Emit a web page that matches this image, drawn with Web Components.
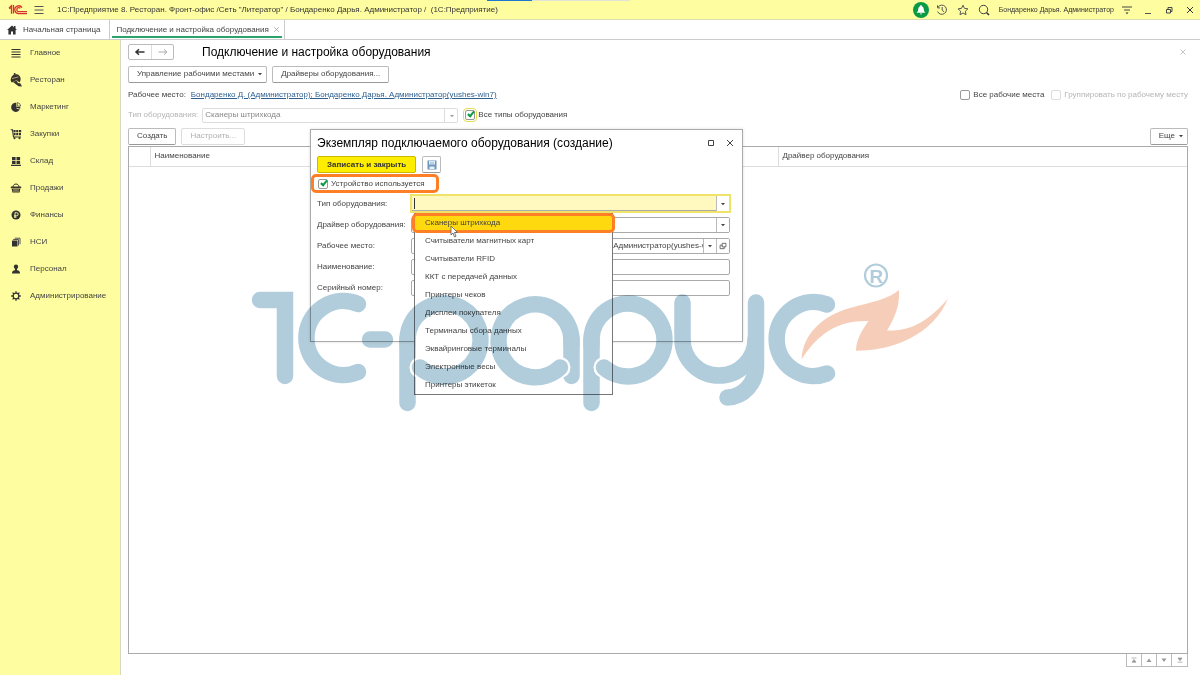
<!DOCTYPE html>
<html lang="ru">
<head>
<meta charset="utf-8">
<title>1С:Предприятие</title>
<style>
html,body{height:100%;margin:0}
body{font:8px/12px "Liberation Sans",Arial,sans-serif;color:#444;background:#fff}
</style>
</head>
<body>
<app-shell></app-shell>
<script>
const define=(name,html,setup)=>{
  const t=document.createElement('template');
  t.innerHTML='<style>*{box-sizing:border-box}button,input,select{font:inherit;color:inherit;margin:0}</style>'+html;
  customElements.define(name,class extends HTMLElement{
    constructor(){super();this.attachShadow({mode:'open'}).append(t.content.cloneNode(true));}
    connectedCallback(){if(setup&&!this.ready){this.ready=true;setup(this,this.shadowRoot);}}
  });
};

const icons={
  logo:['0 0 20 12','<g fill="none" stroke="#d8322c" stroke-width="1.3"><path d="M1 4l2.500-2.200v8M5.500 1v8.500M1 4.400h1.600"/><path d="M14 3.600A3.900 3.900 0 1 0 11 9.600h8"/><path d="M12.300 4.300A2 2 0 1 0 11 7.600h8"/></g>'],
  menu:['0 0 12 12','<path d="M1.500 2.500h9M1.500 6h9M1.500 9.500h9" stroke="#555" stroke-width="1"/>'],
  home:['0 0 12 12','<path d="M6 1.500L1 6h1.400v4.500h2.600V7.500h2v3h2.600V6H11L9.500 4.600V2H8v1.300z" fill="#333"/>'],
  bell:['0 0 16 16','<circle cx="8" cy="8" r="8" fill="#0a9a45"/><path d="M8 3.200c-.7 0-1 .4-1 1C5.200 5 5.300 7 5 8.700c-.2.900-.9 1.300-1.300 2.100h8.600c-.4-.8-1.100-1.200-1.300-2.100C10.700 7 10.800 5 9 4.200c0-.6-.3-1-1-1zM6.900 11.500c.3 1.400 1.900 1.400 2.200 0z" fill="#fff"/>'],
  history:['0 0 12 12','<path d="M2 3.200A4.600 4.600 0 1 1 1.600 7.500M1.500 1.300v2.600h2.600M6.200 3v3.200l2 1.700" fill="none" stroke="#555"/>'],
  star:['0 0 12 12','<path d="M6 1.200l1.500 3.200 3.400.4-2.500 2.400.6 3.500L6 9l-3 1.700.6-3.500L1.100 4.800l3.400-.4z" fill="none" stroke="#555"/>'],
  search:['0 0 12 12','<circle cx="5.500" cy="5.500" r="4.200" fill="none" stroke="#444"/><path d="M8.500 8.500l2.500 2.500" stroke="#333" stroke-width="1.500"/>'],
  funnel:['0 0 12 12','<path d="M1 3h10M3 6h6" stroke="#444"/><path d="M4.500 8.500h3L6 10.300z" fill="#333"/>'],
  min:['0 0 12 12','<path d="M3 9.500h6" stroke="#555"/>'],
  restore:['0 0 12 12','<path d="M3.500 5.500h4v3.500h-4zM5 5.500V3.500h4v4H7.500" fill="none" stroke="#444"/>'],
  close:['0 0 12 12','<path d="M3 3l6 6M9 3l-6 6" stroke="currentColor"/>'],
  max:['0 0 12 12','<path d="M3.500 3.500h5v5h-5z" fill="none" stroke="#444"/>'],
  list:['0 0 12 12','<path d="M1.500 2.500h9M1.500 5h9M1.500 7.500h9M1.500 10h9" stroke="#333" stroke-width="1.200"/>'],
  food:['0 0 16 16','<path d="M3 6.500C3.400 3.500 6.200 1.600 9 2.300c2.700.7 4 3.200 3.600 5.700l-1 2.500-3.200-2.200L4 10.500C2.600 9.500 2.400 8 3 6.500z" fill="#3a352c"/><circle cx="6.700" cy="1.900" r="1" fill="#3a352c"/><path d="M5 10l3.500-1.500 1.500 2.500 2.500.5 1.500 3-3.500-.3z" fill="#3a352c"/><path d="M4 6.600l6.500-1.700" stroke="#d8d48a" stroke-width=".7"/>'],
  pie:['0 0 12 12','<path d="M6.300 1.800v4h4A4.600 4.600 0 1 1 6.300 1.800z" fill="#333"/><path d="M7.300 1.500A4 4 0 0 1 10.700 5H7.300z" fill="none" stroke="#555" stroke-width=".8"/><path d="M6.500 7.300l3.600.8" stroke="#fefd9f" stroke-width=".8"/>'],
  cart:['0 0 12 12','<path d="M.7 1.800h1.800l1 7.200H11" fill="none" stroke="#333" stroke-width="1.100"/><path d="M3.400 2h2.200v2.300H3.700zM6.200 2h2.100v2.300H6.200zM9 2h2.200v2.300H9zM3.800 5h1.800v2.300H4zM6.200 5h2.100v2.300H6.200zM9 5h2v2.300H9z" fill="#333"/><circle cx="4.500" cy="10.300" r="1" fill="#333"/><circle cx="9.500" cy="10.300" r="1" fill="#333"/>'],
  boxes:['0 0 12 12','<path d="M2 2h3.600v3.200H2zM6.500 2h3.600v3.200H6.500zM2 6h3.600v3H2zM6.500 6h3.600v3H6.500zM1 9.800h10V11H1z" fill="#333"/>'],
  basket:['0 0 12 12','<path d="M.8 4.600h10.400v1.600H.8zM1.700 6.700h8.600L9.600 10.500H2.400z" fill="#3a352c"/><path d="M3 5c.3-4 5.700-4 6 0" fill="none" stroke="#3a352c"/><path d="M4 7v3M6 7v3M8 7v3" stroke="#fefd9f" stroke-width=".6"/>'],
  ruble:['0 0 12 12','<circle cx="6" cy="6" r="4.500" fill="#333"/><path d="M5 9V3.700h1.700a1.500 1.500 0 0 1 0 3H4M4 8h2.500" fill="none" stroke="#fefd9f" stroke-width=".9"/>'],
  books:['0 0 12 12','<path d="M2 4.500h5.500V10.500H2z" fill="#333"/><path d="M3.200 3.500h5.300v6M4.700 2.200H10v6" fill="none" stroke="#555"/>'],
  person:['0 0 12 12','<circle cx="6" cy="3.800" r="2.200" fill="#333"/><path d="M2 10.500c0-2.300 1.200-3 2.700-3.200h2.600C8.800 7.500 10 8.200 10 10.500z" fill="#333"/><path d="M6 5v3" stroke="#333" stroke-width="2"/>'],
  gear:['0 0 12 12','<circle cx="6" cy="6" r="2.800" fill="none" stroke="#333" stroke-width="1.200"/><path d="M6 1.200v2M6 8.800v2M1.200 6h2M8.800 6h2M2.600 2.600L4 4M8 8l1.400 1.400M9.400 2.600L8 4M4 8L2.600 9.400" stroke="#333" stroke-width="1.300"/>'],
  back:['0 0 12 12','<path d="M2 6h8.500M5 3.300L2 6l3 2.700" fill="none" stroke="#333" stroke-width="1.500"/>'],
  fwd:['0 0 12 12','<path d="M1.500 6H10M7 3.300L10 6 7 8.700" fill="none" stroke="#aaa"/>'],
  caret:['0 0 6 6','<path d="M1 2h4L3 4.200z" fill="#444"/>'],
  save:['0 0 12 12','<path d="M1.500 1.500h9v9h-9z" fill="#6d94bd"/><path d="M3 2h6v3.500H3zM3.500 7.500h5V10h-5z" fill="#e6eef6"/><path d="M4 3.200h4M4 4.500h4" stroke="#8fb0d2" stroke-width=".6"/>'],
  open:['0 0 12 12','<path d="M5 2.800h4.500V7H5zM7.500 7v2.200H2.500V5H5" fill="none" stroke="#555"/>'],
  first:['0 0 12 12','<path d="M3.500 4h5M4 8.200L6 5.500l2 2.700z" fill="#999" stroke="#999" stroke-width=".7"/>'],
  up:['0 0 12 12','<path d="M3.500 8L6 4.500 8.500 8z" fill="#999"/>'],
  down:['0 0 12 12','<path d="M3.500 4.500L6 8l2.500-3.500z" fill="#999"/>'],
  last:['0 0 12 12','<path d="M3.500 8.200h5M4 4l2 2.700L8 4z" fill="#999" stroke="#999" stroke-width=".7"/>']
};
define('ui-icon','<style>:host{display:inline-flex;flex:none;width:12px;height:12px}svg{width:100%;height:100%;display:block}</style>',(el,r)=>{
  const [box,art]=icons[el.getAttribute('name')];
  r.innerHTML+=`<svg viewBox="${box}" aria-hidden="true">${art}</svg>`;
});

define('ui-button',`<style>
:host{display:inline-flex;height:17px;flex:none}
button{display:flex;align-items:center;justify-content:center;gap:3px;width:100%;height:100%;padding:0 8px;border:1px solid #bbb;border-bottom-color:#999;border-radius:2px;background:#fff;white-space:nowrap}
:host([menu]) button{padding:0 3px 0 8px}
:host([primary]) button{background:#ffed00;border-color:#c9b900;color:#333;font-weight:bold;padding:0 9px}
:host([off]) button{color:#b0b0b0;border-color:#ddd}
:host([square]) button{padding:0}
</style><button type="button"><slot></slot></button>`,(el,r)=>{
  const b=r.querySelector('button');
  if(el.hasAttribute('off'))b.disabled=true;
  if(el.title)b.setAttribute('aria-label',el.title);
});

define('ui-check',`<style>
:host{display:inline-flex;flex:none}
label{display:flex;align-items:center;gap:3px;white-space:nowrap}
input{appearance:none;width:10px;height:10px;border:1px solid #999;border-radius:2px;background:#fff;position:relative}
input:checked::before{content:"";position:absolute;left:3px;top:-1px;box-sizing:content-box;width:2px;height:5px;border:solid #0a9a45;border-width:0 2px 2px 0;transform:rotate(40deg)}
:host([off]) label{color:#b5b5b5}:host([off]) input{border-color:#ddd}
:host([focused]) input{outline:1px solid #e6dc50;outline-offset:1px}
</style><label><input type="checkbox"><span><slot></slot></span></label>`,(el,r)=>{
  const i=r.querySelector('input');
  i.checked=el.hasAttribute('checked');i.disabled=el.hasAttribute('off');
});

define('title-bar',`<style>
:host{display:flex;align-items:center;height:20px;padding:0 4px 0 8px;background:#fefd9f;border-bottom:1px solid #dcdcb4;color:#333;position:relative}
h1{font:inherit;margin:0 auto 0 12px;white-space:nowrap}
.logo{width:20px;margin-right:5px}.bell{width:16px;height:16px;margin-right:-2px}
.tools,.win{display:flex;align-items:center;gap:9px}
.win{margin-left:9px}.who{margin-right:-2px;white-space:nowrap;font-size:7px}
.mark{position:absolute;left:487px;top:0;width:143px;height:1px;background:linear-gradient(90deg,#1f78d0 45px,#e2e2d8 45px)}
</style>
<ui-icon class="logo" name="logo"></ui-icon><ui-icon name="menu"></ui-icon>
<h1>1С:Предприятие 8. Ресторан. Фронт-офис /Сеть "Литератор" / Бондаренко Дарья. Администратор /&nbsp; (1С:Предприятие)</h1>
<div class="tools"><ui-icon class="bell" name="bell"></ui-icon><ui-icon name="history"></ui-icon><ui-icon name="star"></ui-icon><ui-icon name="search"></ui-icon><span class="who">Бондаренко Дарья. Администратор</span><ui-icon name="funnel"></ui-icon></div>
<div class="win"><ui-icon name="min"></ui-icon><ui-icon name="restore"></ui-icon><ui-icon name="close"></ui-icon></div><span class="mark"></span>`);

define('tab-bar',`<style>
:host{display:flex;height:20px;border-bottom:1px solid #ccc;background:#fff;color:#444}
a{display:flex;align-items:center;color:inherit;text-decoration:none;border-right:1px solid #ccc;white-space:nowrap}
.home{padding:0 9px 0 6px;gap:5px}
.cur{padding:0 3px 0 6px;gap:3px;position:relative}
.cur::after{content:"";position:absolute;inset:auto 2px 1px;height:2px;background:#2ba36a}
.cur ui-icon{color:#999;width:9px;height:9px}
</style><a class="home" href="#home"><ui-icon name="home"></ui-icon>Начальная страница</a><a class="cur" href="#equipment">Подключение и настройка оборудования<ui-icon name="close"></ui-icon></a>`);

define('nav-item',`<style>:host{display:block}
a{display:flex;align-items:center;height:27px;padding-left:8px;color:#444;text-decoration:none}
.i{width:16px;margin-right:6px;display:flex;justify-content:center}.big{width:16px;height:16px}</style><a href="#"><span class="i"></span><slot></slot></a>`,(el,r)=>{
  const n=el.getAttribute('icon');
  r.querySelector('.i').innerHTML=`<ui-icon name="${n}"${n==='food'?' class="big"':''}></ui-icon>`;
});
define('side-nav',`<style>:host{display:block;background:#fefd9f;border-right:1px solid #d8d8c0}nav{margin-top:-1px}</style><nav>
<nav-item icon="list">Главное</nav-item><nav-item icon="food">Ресторан</nav-item><nav-item icon="pie">Маркетинг</nav-item><nav-item icon="cart">Закупки</nav-item><nav-item icon="boxes">Склад</nav-item><nav-item icon="basket">Продажи</nav-item><nav-item icon="ruble">Финансы</nav-item><nav-item icon="books">НСИ</nav-item><nav-item icon="person">Персонал</nav-item><nav-item icon="gear">Администрирование</nav-item></nav>`);

define('equipment-table',`<style>
:host{display:flex;flex-direction:column;flex:1;min-height:0}
.box{flex:1;border:1px solid #aaa}
table{width:100%;border-collapse:collapse;table-layout:fixed}
th{height:19px;padding:0 4px;text-align:left;font-weight:normal;border-bottom:1px solid #ddd;border-right:1px solid #ddd}
th:last-child{border-right:0}.n{width:21px}.d{width:409px}
.pager{display:flex;align-self:flex-end;height:13px;border:1px solid #bbb;border-top:0}
.pager button{width:15px;padding:0;border:0;border-right:1px solid #bbb;background:#fff;display:grid;place-items:center}
.pager button:last-child{border-right:0}
</style><div class="box"><table><thead><tr><th class="n"></th><th>Наименование</th><th class="d">Драйвер оборудования</th></tr></thead></table></div>
<div class="pager"><button type="button" aria-label="В начало"><ui-icon name="first"></ui-icon></button><button type="button" aria-label="Вверх"><ui-icon name="up"></ui-icon></button><button type="button" aria-label="Вниз"><ui-icon name="down"></ui-icon></button><button type="button" aria-label="В конец"><ui-icon name="last"></ui-icon></button></div>`);

define('equipment-page',`<style>
:host{display:flex;flex-direction:column;gap:5px;padding:4px 12px 8px 7px;position:relative;min-width:0}
.row{display:flex;align-items:center;height:16px;gap:5px;white-space:nowrap}
.nav{display:flex;height:16px;border:1px solid #bbb;border-radius:2px}
.nav button{width:22px;border:0;padding:0;background:none;display:grid;place-items:center}
.nav button+button{border-left:1px solid #ddd}
h2{font:12px/16px "Liberation Sans",Arial,sans-serif;color:#000;margin:0 auto 0 23px}
.x{width:10px;height:10px;color:#bbb}
a{color:#2d5f91}.right{margin-left:auto;display:flex;gap:7px}
.sel{position:relative;display:flex;width:256px;margin:0 2px 0 -1px}
select{appearance:none;width:100%;height:15px;padding:0 2px;border:1px solid #ddd;border-radius:2px;background:linear-gradient(#ddd,#ddd) right 12px top/1px 100% no-repeat #fff;color:#888;opacity:1}
.sel ui-icon{position:absolute;right:3px;top:5px;width:6px;height:6px;opacity:.5}
.off{color:#b5b5b5}.car{width:6px;height:6px}
.lower{margin-top:1px;margin-bottom:-1px}
equipment-table{margin-top:-3px}
</style>
<div class="row"><div class="nav"><button type="button" aria-label="Назад"><ui-icon name="back"></ui-icon></button><button type="button" aria-label="Вперед"><ui-icon name="fwd"></ui-icon></button></div><h2>Подключение и настройка оборудования</h2><ui-icon class="x" name="close"></ui-icon></div>
<div class="row lower"><ui-button menu>Управление рабочими местами <ui-icon class="car" name="caret"></ui-icon></ui-button><ui-button>Драйверы оборудования...</ui-button></div>
<div class="row lower"><span>Рабочее место:</span><a href="#workplace">Бондаренко Д. (Администратор); Бондаренко Дарья. Администратор(yushes-win7)</a><div class="right"><ui-check>Все рабочие места</ui-check><ui-check off>Группировать по рабочему месту</ui-check></div></div>
<div class="row"><label class="off" for="t">Тип оборудования:</label><div class="sel"><select id="t" disabled><option>Сканеры штрихкода</option></select><ui-icon name="caret"></ui-icon></div><ui-check checked focused>Все типы оборудования</ui-check></div>
<div class="row"><ui-button>Создать</ui-button><ui-button off>Настроить...</ui-button><div class="right"><ui-button menu>Еще <ui-icon class="car" name="caret"></ui-icon></ui-button></div></div>
<equipment-table></equipment-table>`);

define('type-list',`<style>
:host{display:block;border:1px solid #777;background:#fff}
ul{list-style:none;margin:0;padding:0}
li{height:18px;line-height:18px;padding-left:10px;white-space:nowrap;position:relative}
li[aria-selected=true]{background:#ffd90f}
li[aria-selected=true]::after{content:"";position:absolute;inset:-1px -3px;border:3px solid #ff7f27;border-radius:5px}
svg{position:absolute;left:35px;top:11px;width:9px;height:13px;z-index:1}
</style><ul role="listbox"><li role="option" aria-selected="true">Сканеры штрихкода</li><li role="option">Считыватели магнитных карт</li><li role="option">Считыватели RFID</li><li role="option">ККТ с передачей данных</li><li role="option">Принтеры чеков</li><li role="option">Дисплеи покупателя</li><li role="option">Терминалы сбора данных</li><li role="option">Эквайринговые терминалы</li><li role="option">Электронные весы</li><li role="option">Принтеры этикеток</li></ul>
<svg viewBox="0 0 9 13"><path d="M1 1v9l2-2 1.500 4 1.500-.7L4.500 7.500H7.500z" fill="#fff" stroke="#555" stroke-width=".8"/></svg>`);

define('form-field',`<style>
:host{display:grid;grid-template-columns:94px 1fr;align-items:center;height:21px;position:relative}
label{white-space:nowrap}
.f{display:flex;height:16px;border:1px solid #aaa;border-radius:2px;margin-right:1px;background:#fff}
input{flex:1;min-width:0;border:0;padding:0 0 0 3px;background:none;outline:0}
button{width:13px;border:0;border-left:1px solid #bbb;background:#fff;padding:0;display:grid;place-items:center}
.c{width:6px;height:6px}.o{width:10px;height:10px}
:host([active]) .f{height:19px;margin:0 0 0 -1px;border:2px solid #efe36a;border-radius:0}
:host([active]) input{background:linear-gradient(#333,#333) 2px 2px/1px 11px no-repeat #fff8bf;border-bottom:1px solid #aaa}
</style><label for="i"></label><div class="f"><input id="i" type="text"></div><slot></slot>`,(el,r)=>{
  r.querySelector('label').textContent=el.getAttribute('label');
  r.querySelector('input').value=el.getAttribute('value')||'';
  const f=r.querySelector('.f');
  if(el.hasAttribute('drop'))f.insertAdjacentHTML('beforeend','<button type="button" aria-label="Выбрать"><ui-icon class="c" name="caret"></ui-icon></button>');
  if(el.hasAttribute('link'))f.insertAdjacentHTML('beforeend','<button type="button" aria-label="Открыть"><ui-icon class="o" name="open"></ui-icon></button>');
});

define('equipment-dialog',`<style>
:host{display:block;width:433px;min-height:213px;padding:0 11px 0 6px;background:#fff;border:1px solid #aaa;box-shadow:0 0 3px #0002}
header{display:flex;align-items:center;height:25px;gap:7px;margin-right:-5px}
h2{font:12px/16px "Liberation Sans",Arial,sans-serif;color:#000;margin:0 auto 0 0;white-space:nowrap}
.cmd{display:flex;gap:6px;height:19px;align-items:center}
.used{height:19px;display:flex;align-items:center;position:relative;width:122px;padding-left:1px}
.used::after{content:"";position:absolute;inset:0 0 0 -6px;border:3px solid #ff7f27;border-radius:5px;pointer-events:none}
type-list{position:absolute;left:97px;top:20px;width:199px;z-index:2}
.sq{width:19px}
</style><header><h2>Экземпляр подключаемого оборудования (создание)</h2><ui-icon name="max"></ui-icon><ui-icon name="close"></ui-icon></header>
<div class="cmd"><ui-button primary>Записать и закрыть</ui-button><ui-button square class="sq" title="Записать"><ui-icon name="save"></ui-icon></ui-button></div>
<div class="used"><ui-check checked>Устройство используется</ui-check></div>
<form-field active drop label="Тип оборудования:"><type-list></type-list></form-field>
<form-field drop label="Драйвер оборудования:"></form-field>
<form-field drop link label="Рабочее место:" value="Бондаренко Д. (Администратор); Бондаренко Дарья. Администратор(yushes-win7)"></form-field>
<form-field label="Наименование:"></form-field>
<form-field label="Серийный номер:"></form-field>`);

define('brand-mark',`<style>:host{display:grid;place-items:center;pointer-events:none;mix-blend-mode:multiply}svg{width:698px;height:150px}text{font:bold 19px "Liberation Sans",Arial,sans-serif}</style>
<svg viewBox="251 263 698 150" aria-hidden="true">
<g fill="none" stroke="#b1cddc" stroke-width="16.500" stroke-linecap="round">
<path d="M260 300H285V376"/><path d="M358 304A37 37 0 1 0 358 372"/><path d="M370 339.500H385"/>
<path d="M407.500 403V339"/><circle cx="420" cy="367.500" r="10.500" fill="#fff" stroke="none"/><path d="M407.500 345V339A36.500 36.500 0 1 1 420 367.500"/>
<path d="M571.500 376V339"/><circle cx="560" cy="367.500" r="10.500" fill="#fff" stroke="none"/><path d="M571.500 345V339A36.500 36.500 0 1 0 560 367.500"/>
<path d="M591.500 403V339"/><circle cx="604" cy="367.500" r="10.500" fill="#fff" stroke="none"/><path d="M591.500 345V339A36.500 36.500 0 1 1 604 367.500"/>
<path d="M682.500 302.500V339A36.500 36.500 0 0 0 755.500 339"/><path d="M756 302.500V366A29 31.500 0 0 1 727.500 397.500"/>
<path d="M827 304.500A37 37 0 1 0 827 373.500"/></g>
<circle cx="876" cy="275.500" r="11" fill="none" stroke="#b1cddc" stroke-width="2.200"/><text x="869.500" y="282.500" fill="#b1cddc">R</text>
<path d="M801.600 359.300C803 334 822 316 850 308C872 302 889 299 899 290C900 307 894 319 887 330.500C909 331 926 324 948 298.500C933 335 892 351 856 350.700C856 340 862 330 868.500 321C840 320 819 332 801.600 359.300z" fill="#f6cdb8"/>
</svg>`);

define('app-shell',`<style>
:host{display:grid;grid-template:auto auto 1fr/121px 1fr;min-height:100vh;position:relative}
title-bar,tab-bar{grid-column:1/-1}
main{display:flex;position:relative;min-width:0;isolation:isolate}
equipment-page{flex:1}
equipment-dialog{position:absolute;left:189px;top:89px}
brand-mark{position:absolute;inset:0;z-index:3}
</style><title-bar></title-bar><tab-bar></tab-bar><side-nav></side-nav><main><equipment-page></equipment-page><equipment-dialog></equipment-dialog></main><brand-mark></brand-mark>`);
</script>
</body>
</html>
